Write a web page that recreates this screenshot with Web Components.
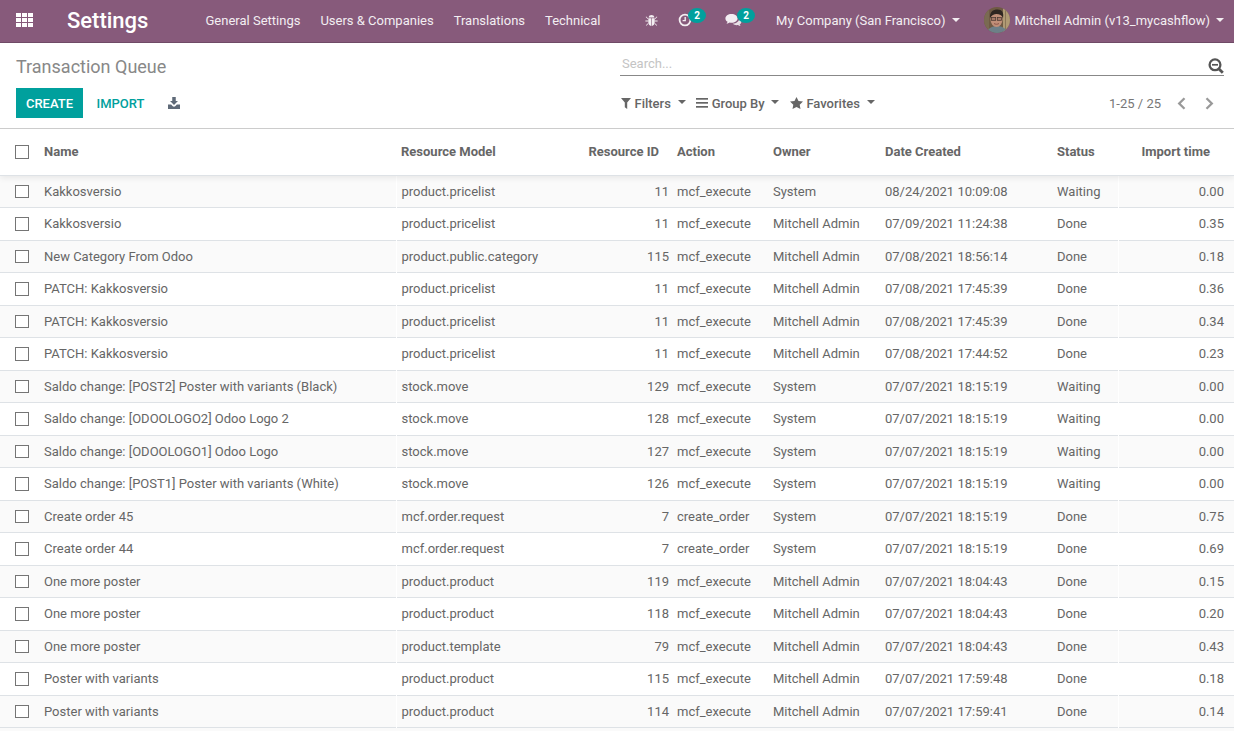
<!DOCTYPE html>
<html>
<head>
<meta charset="utf-8">
<title>Transaction Queue</title>
<style>
    html, body { margin: 0; padding: 0; background: #fff; height: 731px; overflow: hidden; }
    body { font-family: Roboto, "Noto Sans", sans-serif; font-size: 13px; color: #666; }
</style>
</head>
<body>
<app-navbar></app-navbar>
<control-panel></control-panel>
<queue-table></queue-table>

<script>
const ICONS = {
    apps: '<svg width="17" height="14" viewBox="0 0 17 14" fill="currentColor"><rect x="0" y="0" width="5" height="4"/><rect x="6" y="0" width="5" height="4"/><rect x="12" y="0" width="5" height="4"/><rect x="0" y="5" width="5" height="4"/><rect x="6" y="5" width="5" height="4"/><rect x="12" y="5" width="5" height="4"/><rect x="0" y="10" width="5" height="4"/><rect x="6" y="10" width="5" height="4"/><rect x="12" y="10" width="5" height="4"/></svg>',
    bug: '<svg width="13" height="13" viewBox="0 0 13 13" fill="currentColor"><path d="M3.6 3.4C4 1.8 5 1 6.5 1S9 1.8 9.4 3.4z"/><path d="M3.3 4.2h2.9V12C4.4 11.8 3.3 10.5 3.3 8.6zM6.8 4.2h2.9v4.4c0 1.900-1.100 3.200-2.900 3.400z"/><path d="M1.200 2.400l2 2-.5.5-2-2zM11.800 2.400l-2 2 .5.5 2-2zM.4 6.600h3v.8h-3zM9.600 6.600h3v.8h-3zM2.900 9.200l.5.5-2 2-.5-.5zM10.100 9.200l-.5.5 2 2 .5-.5z"/></svg>',
    clock: '<svg width="14" height="14" viewBox="0 0 14 14" fill="none" stroke="currentColor"><circle cx="7" cy="7" r="5.4" stroke-width="1.800"/><path d="M7.200 4v3.600H4.600" stroke-width="1.400"/></svg>',
    comments: '<svg width="17" height="15" viewBox="0 0 17 15" fill="currentColor"><path d="M6.500 1C3 1 .4 3 .4 5.400c0 1.400.9 2.600 2.200 3.400-.2.8-.6 1.400-1.200 2 1.200-.1 2.400-.6 3.300-1.300.6.1 1.200.2 1.800.2 3.400 0 6.100-2 6.100-4.300S9.900 1 6.500 1z"/><path d="M14.300 5.600c0 2.900-3 5-6.600 5.200 1 .9 2.400 1.400 3.900 1.400.5 0 .9 0 1.400-.1.7.5 1.600.9 2.600 1-.4-.5-.8-1-.9-1.600 1-.7 1.700-1.600 1.700-2.700 0-1.300-.9-2.400-2.200-3.200z" opacity=".9"/></svg>',
    download: '<svg width="12" height="12" viewBox="0 0 13 13" fill="currentColor"><path d="M4.600 0h3.800v4.400h2.400L6.500 8.800 2.200 4.400h2.400z"/><path d="M0 8.200h3.400l1.800 1.800c.7.7 1.900.7 2.600 0l1.800-1.800H13V13H0z"/></svg>',
    filter: '<svg width="10" height="11" viewBox="0 0 10 11" fill="currentColor"><path d="M0 0h10L6.200 4.600V11L3.800 9.200V4.600z"/></svg>',
    bars: '<svg width="12" height="10" viewBox="0 0 12 10" fill="currentColor"><rect y="0" width="12" height="1.700"/><rect y="4" width="12" height="1.700"/><rect y="8" width="12" height="1.700"/></svg>',
    star: '<svg width="13" height="12" viewBox="0 0 13 12" fill="currentColor"><path d="M6.500 0l2 4 4.500.6-3.300 3.100.8 4.300-4-2.100-4 2.100.8-4.300L0 4.600 4.500 4z"/></svg>',
    search: '<svg width="16" height="16" viewBox="0 0 16 16" fill="none" stroke="currentColor" stroke-width="2.300"><circle cx="7" cy="6.800" r="5.400"/><path d="M11 11l3.800 3.800" stroke-width="2.800"/><path d="M4 6.800h6" stroke-width="1.700"/></svg>',
    left: '<svg width="9" height="13" viewBox="0 0 9 13" fill="none" stroke="currentColor" stroke-width="2.300"><path d="M7.500 1.200L2.200 6.500l5.300 5.300"/></svg>',
    right: '<svg width="9" height="13" viewBox="0 0 9 13" fill="none" stroke="currentColor" stroke-width="2.300"><path d="M1.500 1.200l5.300 5.300-5.300 5.300"/></svg>',
    avatar: '<svg width="26" height="26" viewBox="0 0 26 26"><defs><clipPath id="c"><circle cx="13" cy="13" r="13"/></clipPath></defs><g clip-path="url(#c)"><rect width="26" height="26" fill="#6f5a44"/><rect x="19" width="7" height="26" fill="#b09a74"/><rect x="21" width="1" height="26" fill="#8a7658"/><rect x="0" width="5" height="26" fill="#7a6a52"/><path d="M3 26c1-5 5-7 10-7s9 2 10 7z" fill="#6d8088"/><ellipse cx="12.500" cy="12.500" rx="6" ry="7.500" fill="#c08f78"/><path d="M6 11C5.500 5 9 2.500 13.500 2.500S20 5.500 19 11C18 8 15.500 7 12.500 7 10 7 7.500 8.500 6 11z" fill="#2f2620"/><rect x="7.500" y="10.500" width="4.200" height="2.800" fill="#a87a68" stroke="#43362e" stroke-width=".7"/><rect x="13.300" y="10.500" width="4.200" height="2.800" fill="#a87a68" stroke="#43362e" stroke-width=".7"/><path d="M10 16.500c1.500 1 3.500 1 5 0" stroke="#8c5548" stroke-width="1" fill="none"/></g></svg>'
};

const ROWS = [
    ['Kakkosversio', 'product.pricelist', '11', 'mcf_execute', 'System', '08/24/2021 10:09:08', 'Waiting', '0.00'],
    ['Kakkosversio', 'product.pricelist', '11', 'mcf_execute', 'Mitchell Admin', '07/09/2021 11:24:38', 'Done', '0.35'],
    ['New Category From Odoo', 'product.public.category', '115', 'mcf_execute', 'Mitchell Admin', '07/08/2021 18:56:14', 'Done', '0.18'],
    ['PATCH: Kakkosversio', 'product.pricelist', '11', 'mcf_execute', 'Mitchell Admin', '07/08/2021 17:45:39', 'Done', '0.36'],
    ['PATCH: Kakkosversio', 'product.pricelist', '11', 'mcf_execute', 'Mitchell Admin', '07/08/2021 17:45:39', 'Done', '0.34'],
    ['PATCH: Kakkosversio', 'product.pricelist', '11', 'mcf_execute', 'Mitchell Admin', '07/08/2021 17:44:52', 'Done', '0.23'],
    ['Saldo change: [POST2] Poster with variants (Black)', 'stock.move', '129', 'mcf_execute', 'System', '07/07/2021 18:15:19', 'Waiting', '0.00'],
    ['Saldo change: [ODOOLOGO2] Odoo Logo 2', 'stock.move', '128', 'mcf_execute', 'System', '07/07/2021 18:15:19', 'Waiting', '0.00'],
    ['Saldo change: [ODOOLOGO1] Odoo Logo', 'stock.move', '127', 'mcf_execute', 'System', '07/07/2021 18:15:19', 'Waiting', '0.00'],
    ['Saldo change: [POST1] Poster with variants (White)', 'stock.move', '126', 'mcf_execute', 'System', '07/07/2021 18:15:19', 'Waiting', '0.00'],
    ['Create order 45', 'mcf.order.request', '7', 'create_order', 'System', '07/07/2021 18:15:19', 'Done', '0.75'],
    ['Create order 44', 'mcf.order.request', '7', 'create_order', 'System', '07/07/2021 18:15:19', 'Done', '0.69'],
    ['One more poster', 'product.product', '119', 'mcf_execute', 'Mitchell Admin', '07/07/2021 18:04:43', 'Done', '0.15'],
    ['One more poster', 'product.product', '118', 'mcf_execute', 'Mitchell Admin', '07/07/2021 18:04:43', 'Done', '0.20'],
    ['One more poster', 'product.template', '79', 'mcf_execute', 'Mitchell Admin', '07/07/2021 18:04:43', 'Done', '0.43'],
    ['Poster with variants', 'product.product', '115', 'mcf_execute', 'Mitchell Admin', '07/07/2021 17:59:48', 'Done', '0.18'],
    ['Poster with variants', 'product.product', '114', 'mcf_execute', 'Mitchell Admin', '07/07/2021 17:59:41', 'Done', '0.14']
];

// column widths shared by the header and the rows
const COLUMNS = '40px 357px 176px 100px 96px 112px 172px 66px 115px';

class AppNavbar extends HTMLElement {
    constructor() {
        super();
        this.attachShadow({ mode: 'open' });
        this.shadowRoot.innerHTML = `
            <style>
                :host {
                    display: flex;
                    align-items: center;
                    height: 40px;
                    padding-bottom: 2px;
                    background: #875a7b;
                    border-bottom: 1px solid #6f4a66;
                    color: #fff;
                    font-size: 13px;
                    box-sizing: content-box;
                }
                .apps { display: flex; margin-left: 16px; width: 17px; }
                .brand { margin-left: 34px; font-size: 22px; font-weight: 500; width: 138.5px; }
                nav { display: flex; gap: 20px; color: #f3eef2; }
                .right { display: flex; align-items: center; margin-left: auto; color: #f3eef2; }
                .icon { display: flex; position: relative; }
                .badge {
                    position: absolute;
                    top: -5px;
                    left: 10px;
                    width: 18px;
                    height: 15px;
                    line-height: 15px;
                    border-radius: 50%;
                    background: #00a09d;
                    color: #fff;
                    font-size: 10px;
                    font-weight: 700;
                    text-align: center;
                }
                .caret {
                    display: inline-block;
                    border-top: 4px solid currentColor;
                    border-left: 4px solid transparent;
                    border-right: 4px solid transparent;
                }
                .avatar { display: flex; }
            </style>
            <span class="apps">${ICONS.apps}</span>
            <span class="brand">Settings</span>
            <nav>
                <span>General Settings</span>
                <span>Users &amp; Companies</span>
                <span>Translations</span>
                <span>Technical</span>
            </nav>
            <div class="right">
                <span class="icon" style="margin-right:20px">${ICONS.bug}</span>
                <span class="icon" style="margin-right:33px">${ICONS.clock}<span class="badge">2</span></span>
                <span class="icon" style="margin-right:34px">${ICONS.comments}<span class="badge" style="left:12px">2</span></span>
                <span>My Company (San Francisco)</span>
                <span class="caret" style="margin:0 24px 0 6px"></span>
                <span class="avatar" style="margin-right:5px">${ICONS.avatar}</span>
                <span>Mitchell Admin (v13_mycashflow)</span>
                <span class="caret" style="margin:0 10px 0 6px"></span>
            </div>
        `;
    }
}

class ControlPanel extends HTMLElement {
    constructor() {
        super();
        this.attachShadow({ mode: 'open' });
        this.shadowRoot.innerHTML = `
            <style>
                :host {
                    display: grid;
                    grid-template-columns: 620px 1fr;
                    grid-template-rows: 33px 42px;
                    height: 86px;
                    border-bottom: 1px solid #ccc;
                    box-sizing: border-box;
                    color: #666;
                }
                .title { font-size: 18px; color: #888; padding: 13px 0 0 16px; line-height: 21px; }
                .search {
                    display: flex;
                    justify-content: space-between;
                    align-items: center;
                    height: 23px;
                    margin: 9px 10px 0 0;
                    border-bottom: 1px solid #888;
                    padding: 0 0 0 2px;
                    line-height: 20px;
                }
                .search span { display: flex; color: #555; margin: 5px 0 0 0; }
                .search .ph { color: #c4c4c4; display: inline; margin: 0; }
                .buttons { display: flex; align-items: center; padding: 12px 0 0 16px; }
                .create {
                    background: #00a09d;
                    color: #fff;
                    font-weight: 500;
                    font-size: 13px;
                    width: 67px;
                    height: 30px;
                    line-height: 31px;
                    text-align: center;
                }
                .import { color: #00a09d; font-weight: 500; margin-left: 13.5px; }
                .dl { display: flex; margin-left: 24px; color: #5f6a78; margin-top: -1px; }
                .tools { display: flex; align-items: center; padding: 12px 0 0 1px; }
                .tool { display: flex; align-items: center; gap: 3.5px; margin-right: 10.5px; font-weight: 500; color: #666; }
                .caret {
                    display: inline-block;
                    margin-left: 3.25px;
                    margin-top: -3px;
                    border-top: 4px solid currentColor;
                    border-left: 4px solid transparent;
                    border-right: 4px solid transparent;
                }
                .pager { display: flex; align-items: center; margin-left: auto; margin-right: 20px; color: #777; }
                .pager svg { display: block; }
                .prev { margin-left: 16px; color: #999; display: flex; }
                .next { margin-left: 19px; color: #999; display: flex; }
            </style>
            <div class="title">Transaction Queue</div>
            <div class="search"><span class="ph">Search...</span><span>${ICONS.search}</span></div>
            <div class="buttons">
                <span class="create">CREATE</span>
                <span class="import">IMPORT</span>
                <span class="dl">${ICONS.download}</span>
            </div>
            <div class="tools">
                <span class="tool">${ICONS.filter}Filters<i class="caret"></i></span>
                <span class="tool">${ICONS.bars}Group By<i class="caret"></i></span>
                <span class="tool">${ICONS.star}Favorites<i class="caret"></i></span>
                <div class="pager">
                    <span>1-25 / 25</span>
                    <span class="prev">${ICONS.left}</span>
                    <span class="next">${ICONS.right}</span>
                </div>
            </div>
        `;
    }
}

class QueueCheck extends HTMLElement {
    constructor() {
        super();
        this.attachShadow({ mode: 'open' });
        this.shadowRoot.innerHTML = `
            <style>
                :host {
                    display: block;
                    box-sizing: border-box;
                    width: 14px;
                    height: 13.5px;
                    border: 1.5px solid #757575;
                    background: #fff;
                    margin-left: 15px;
                }
            </style>
        `;
    }
}

class QueueRow extends HTMLElement {
    constructor() {
        super();
        this.attachShadow({ mode: 'open' });
    }

    connectedCallback() {
        const cells = JSON.parse(this.getAttribute('cells'));
        this.shadowRoot.innerHTML = `
            <style>
                :host {
                    display: grid;
                    grid-template-columns: ${COLUMNS};
                    align-items: center;
                    height: 32.5px;
                    box-sizing: border-box;
                    border-bottom: 1px solid #dee2e6;
                    color: #666;
                }
                :host([odd]) { background: #fafafa; }
                .c { padding: 0 4px; white-space: nowrap; overflow: hidden; }
                .c.sep {
                    box-shadow: -1px 0 0 #fff;
                    align-self: stretch;
                    display: flex;
                    align-items: center;
                    margin-bottom: -1px;
                    padding-bottom: 1px;
                }
                .n { text-align: right; }
                .model { padding-left: 4.5px; }
                .last { padding-right: 10px; justify-content: flex-end; }
            </style>
            <queue-check></queue-check>
            <div class="c">${cells[0]}</div>
            <div class="c sep model">${cells[1]}</div>
            <div class="c n">${cells[2]}</div>
            <div class="c">${cells[3]}</div>
            <div class="c">${cells[4]}</div>
            <div class="c">${cells[5]}</div>
            <div class="c">${cells[6]}</div>
            <div class="c n sep last">${cells[7]}</div>
        `;
    }
}

class QueueTable extends HTMLElement {
    constructor() {
        super();
        this.attachShadow({ mode: 'open' });
        const rows = ROWS.map((r, i) =>
            `<queue-row ${i % 2 === 0 ? 'odd' : ''} cells='${JSON.stringify(r)}'></queue-row>`).join('');
        this.shadowRoot.innerHTML = `
            <style>
                :host { display: block; background: #fff; height: 602px; overflow: hidden; }
                .head {
                    display: grid;
                    grid-template-columns: ${COLUMNS};
                    align-items: center;
                    height: 46.5px;
                    box-sizing: border-box;
                    border-bottom: 1px solid #dee2e6;
                    box-shadow: 0 2px 6px rgba(0, 0, 0, .08);
                    font-weight: 700;
                    color: #666;
                    position: relative;
                    z-index: 1;
                }
                .head div { padding: 0 4px; white-space: nowrap; }
                .head .r { text-align: right; padding-right: 14px; }
                .head .r.end { padding-right: 24px; }
                .tail { height: 4px; background: #fafafa; }
            </style>
            <div class="head">
                <queue-check></queue-check>
                <div>Name</div>
                <div>Resource Model</div>
                <div class="r">Resource ID</div>
                <div>Action</div>
                <div>Owner</div>
                <div>Date Created</div>
                <div>Status</div>
                <div class="r end">Import time</div>
            </div>
            ${rows}
            <div class="tail"></div>
        `;
    }
}

customElements.define('app-navbar', AppNavbar);
customElements.define('control-panel', ControlPanel);
customElements.define('queue-check', QueueCheck);
customElements.define('queue-row', QueueRow);
customElements.define('queue-table', QueueTable);
</script>
</body>
</html>
